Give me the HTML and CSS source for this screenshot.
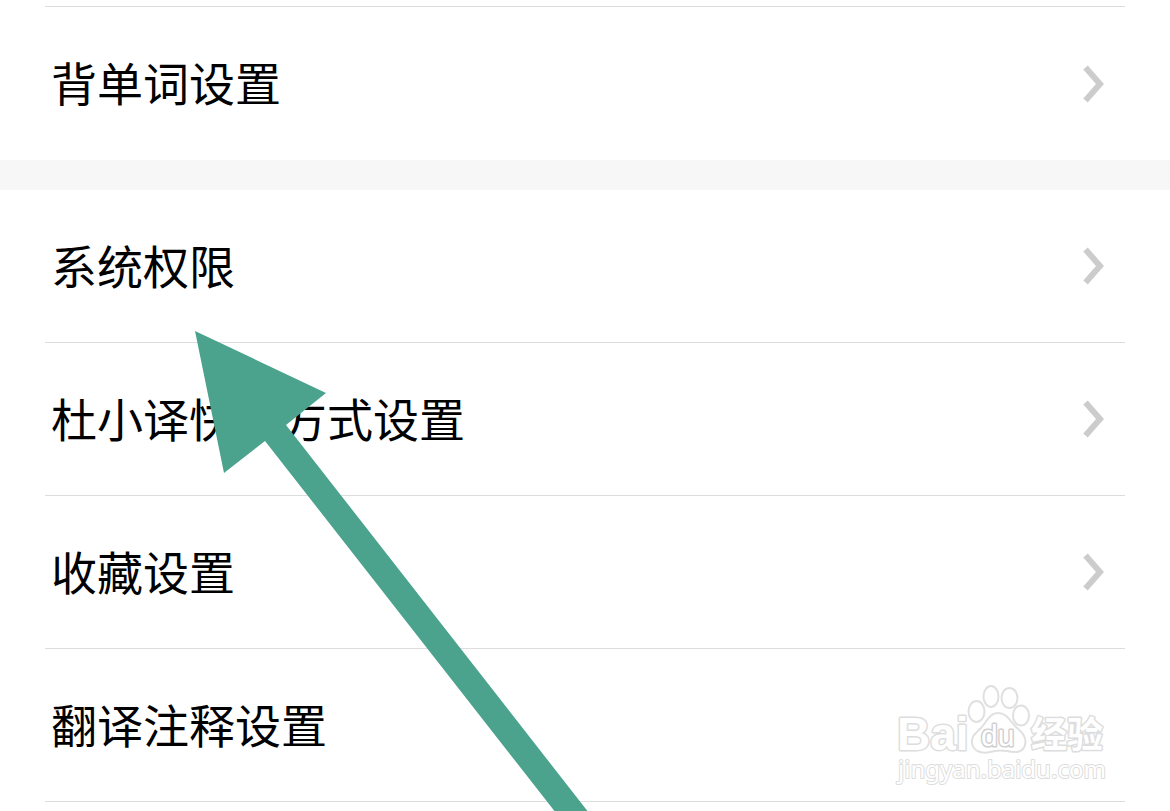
FILE: index.html
```html
<!DOCTYPE html>
<html lang="zh-CN">
<head>
<meta charset="utf-8">
<meta name="viewport" content="width=device-width, initial-scale=1">
<title>设置</title>
<link rel="stylesheet" href="styles.css">
</head>
<body>
<main class="settings">
  <nav class="group group-continued">
    <a class="row" href="#words"><span class="label">背单词设置</span><svg class="chevron" viewBox="0 0 22 38" aria-hidden="true"><path d="M3.500 2.500 18 19 3.500 35.500"/></svg></a>
  </nav>
  <nav class="group">
    <a class="row" href="#permissions"><span class="label">系统权限</span><svg class="chevron" viewBox="0 0 22 38" aria-hidden="true"><path d="M3.500 2.500 18 19 3.500 35.500"/></svg></a>
    <a class="row" href="#shortcut"><span class="label">杜小译快捷方式设置</span><svg class="chevron" viewBox="0 0 22 38" aria-hidden="true"><path d="M3.500 2.500 18 19 3.500 35.500"/></svg></a>
    <a class="row" href="#favorites"><span class="label">收藏设置</span><svg class="chevron" viewBox="0 0 22 38" aria-hidden="true"><path d="M3.500 2.500 18 19 3.500 35.500"/></svg></a>
    <a class="row" href="#notes"><span class="label">翻译注释设置</span></a>
  </nav>
</main>
<svg class="pointer" viewBox="0 0 394 482" aria-hidden="true"><path d="M0 0 131 62 91 94 394 482H361L70 110 29 142Z"/></svg>
<svg class="watermark" viewBox="0 0 216 104" role="img" aria-label="Baidu 经验">
  <text class="brand" x="2" y="65">Bai</text>
  <g class="paw">
    <ellipse cx="81.500" cy="26.500" rx="8" ry="10.500"/>
    <ellipse cx="96" cy="11.500" rx="7.500" ry="10.500"/>
    <ellipse cx="114.500" cy="13" rx="8" ry="10"/>
    <ellipse cx="126" cy="30.500" rx="8" ry="10"/>
    <path d="M103 28C112 28 115 36 121 42C128 48 132 53 130 60C128 68 120 68 112 66C106 65 101 65 95 67C86 69 78 66 77 58C76 51 81 48 86 43C92 37 94 28 103 28Z"/>
  </g>
  <text class="du" x="86" y="61">du</text>
  <text class="product" x="136" y="63">经验</text>
  <text class="domain" x="3" y="93">jingyan.baidu.com</text>
</svg>
</body>
</html>
```
FILE: styles.css
```css
* {
  box-sizing: border-box;
}

body {
  position: relative;
  min-height: 100vh;
  margin: 0;
  overflow: hidden;
  background: #fff;
  color: #000;
  font-family: "Noto Sans CJK SC", sans-serif;
}

.group {
  padding: 0 45px;
}

.group-continued {
  padding-top: 6px;
  border-bottom: 30px solid #f7f7f7;
}

.group-continued .row {
  height: 154px;
  border-top: 1px solid #ddd;
  border-bottom: 0;
}

.row {
  display: flex;
  align-items: center;
  justify-content: space-between;
  height: 153px;
  padding: 0 21px 0 6px;
  border-bottom: 1px solid #ddd;
  color: inherit;
  font-size: 46px;
  line-height: 60px;
  text-decoration: none;
}

.label {
  padding-bottom: 5px;
}

.chevron {
  width: 22px;
  height: 38px;
  fill: none;
  stroke: #ccc;
  stroke-width: 6px;
}

.pointer {
  position: absolute;
  top: 331px;
  left: 195px;
  width: 394px;
  fill: #4ba38e;
  pointer-events: none;
}

.watermark {
  position: absolute;
  right: 59px;
  bottom: 22px;
  width: 216px;
  height: 104px;
  fill: #fff;
  stroke: #ddd;
  stroke-width: 3px;
  stroke-linejoin: round;
  pointer-events: none;
}

.watermark text {
  paint-order: stroke;
}

.brand {
  font: bold 46px "Liberation Sans", sans-serif;
}

.du {
  font: 30px "Liberation Sans", sans-serif;
  stroke: #d0d0d0;
}

.product {
  font: bold 36px "Noto Sans CJK SC", sans-serif;
}

.domain {
  font: 24px "Noto Sans", sans-serif;
  stroke-width: 2px;
}

.paw {
  stroke-width: 2px;
  stroke: #e0e0e0;
}
```
